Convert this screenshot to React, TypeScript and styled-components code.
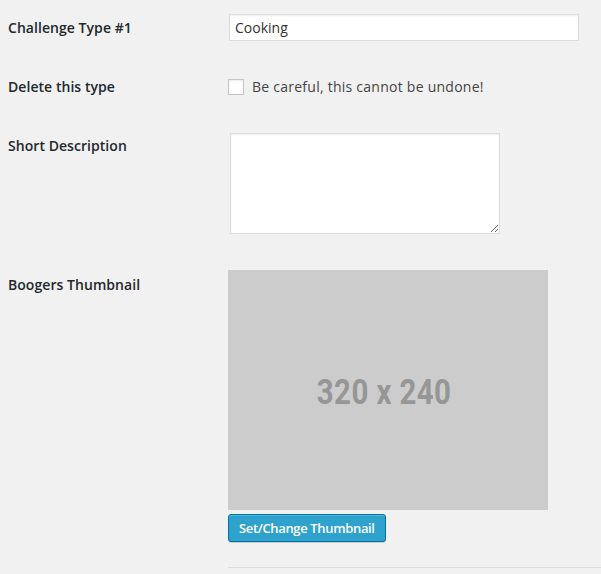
import React from "react";
import styled, { createGlobalStyle } from "styled-components";

const Global = createGlobalStyle`
  html, body { margin: 0; padding: 0; background: #f1f1f1; }
  body { font-family: "Open Sans", "Noto Sans", sans-serif; font-size: 14px; color: #444; }
  * { box-sizing: border-box; }
`;

const Form = styled.div`
  display: flex;
  flex-direction: column;
  padding-left: 8px;
  width: 601px;
`;

const Row = styled.div`
  display: flex;
  align-items: flex-start;
`;

const Label = styled.div<{ $top?: number }>`
  width: 220px;
  flex: none;
  padding-top: ${(p) => p.$top ?? 18.5}px;
  font-size: 14px;
  line-height: 18px;
  font-weight: 600;
  color: #23282d;
  letter-spacing: 0.05px;
`;

const Field = styled.div<{ $top: number; $bottom: number }>`
  flex: 1;
  display: flex;
  flex-direction: column;
  align-items: flex-start;
  padding-top: ${(p) => p.$top}px;
  padding-bottom: ${(p) => p.$bottom}px;
`;

const TextInput = styled.input`
  margin: 0 0 0 1px;
  width: 350px;
  height: 27px;
  padding: 0 5px;
  border: 1px solid #ddd;
  box-shadow: inset 0 1px 2px rgba(0, 0, 0, 0.07);
  background: #fff;
  font-family: "Open Sans", "Noto Sans", sans-serif;
  font-size: 14px;
  color: #333;
  outline: none;
`;

const CheckLabel = styled.label`
  display: flex;
  align-items: center;
  gap: 8px;
  height: 18px;
  line-height: 18px;
  font-size: 14px;
  color: #444;
  letter-spacing: 0.25px;
`;

const CheckBox = styled.input`
  appearance: none;
  margin: 0;
  width: 16px;
  height: 16px;
  border: 1px solid #c4c4c4;
  background: #fff;
  box-shadow: inset 0 1px 2px rgba(0, 0, 0, 0.07);
`;

const TextArea = styled.textarea`
  margin: 0 0 0 2px;
  width: 270px;
  height: 101px;
  border: 1px solid #ddd;
  box-shadow: inset 0 1px 2px rgba(0, 0, 0, 0.07);
  background: #fff;
  outline: none;
  display: block;
  resize: both;
`;

const Thumb = styled.div`
  width: 320px;
  height: 240px;
  background: #cccccc;
  display: flex;
  align-items: center;
  justify-content: center;
`;

const ThumbText = styled.span`
  font-family: Roboto, "DejaVu Sans", sans-serif;
  font-weight: 700;
  font-size: 35px;
  color: #969696;
  display: inline-block;
  transform: translate(-4px, 2px) scaleX(0.84);
  letter-spacing: 0.5px;
`;

const Button = styled.button`
  margin-top: 4px;
  height: 28px;
  padding: 0 10px;
  border: 1px solid #0074a2;
  border-radius: 3px;
  background: #2ea2cc;
  box-shadow: inset 0 1px 0 rgba(120, 200, 230, 0.5), 0 1px 0 rgba(0, 0, 0, 0.15);
  color: #fff;
  font-family: "Open Sans", "Noto Sans", sans-serif;
  font-size: 13px;
  font-weight: 600;
  letter-spacing: -0.35px;
  line-height: 26px;
  cursor: pointer;
`;

const Divider = styled.div`
  margin-top: 25px;
  align-self: stretch;
  height: 1px;
  background: #dddddd;
`;

export default function App() {
  return (
    <>
      <Global />
      <Form>
        <Row>
          <Label>Challenge Type #1</Label>
          <Field $top={14} $bottom={18}>
            <TextInput defaultValue="Cooking" />
          </Field>
        </Row>
        <Row>
          <Label>Delete this type</Label>
          <Field $top={19} $bottom={23}>
            <CheckLabel>
              <CheckBox type="checkbox" />
              Be careful, this cannot be undone!
            </CheckLabel>
          </Field>
        </Row>
        <Row>
          <Label $top={17.5}>Short Description</Label>
          <Field $top={14} $bottom={22}>
            <TextArea />
          </Field>
        </Row>
        <Row>
          <Label $top={19.5}>Boogers Thumbnail</Label>
          <Field $top={14} $bottom={0}>
            <Thumb>
              <ThumbText>320 x 240</ThumbText>
            </Thumb>
            <Button>Set/Change Thumbnail</Button>
            <Divider />
          </Field>
        </Row>
      </Form>
    </>
  );
}
